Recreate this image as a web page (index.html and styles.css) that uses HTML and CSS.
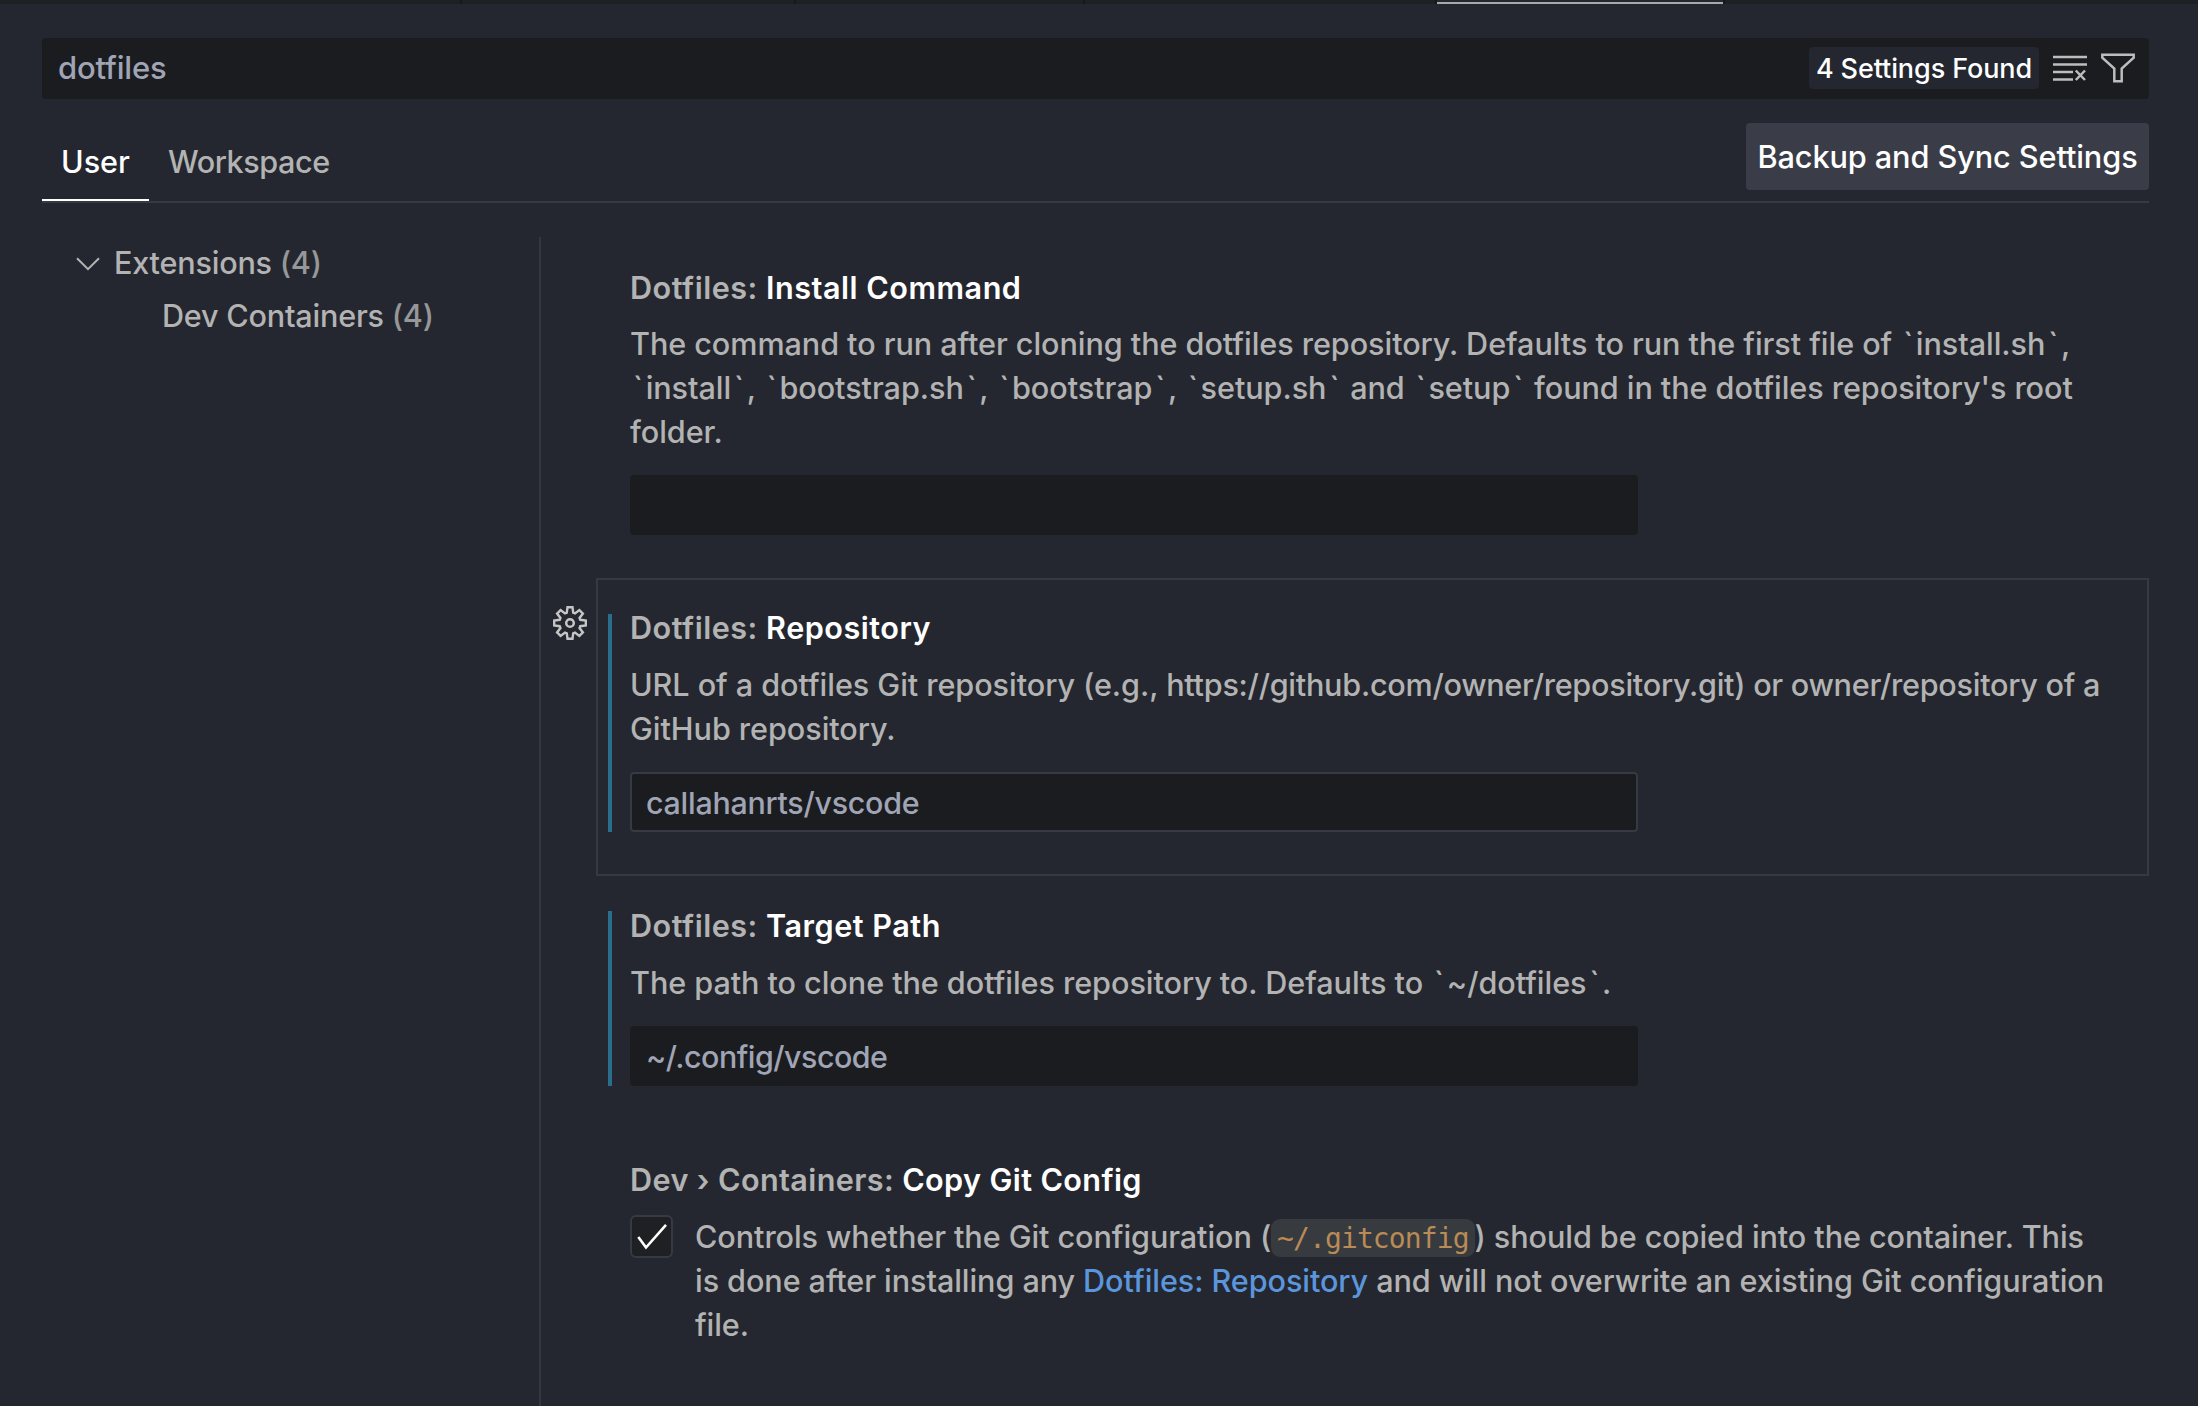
FILE: index.html
```html
<!DOCTYPE html>
<html lang="en">
<head>
<meta charset="utf-8">
<title>Settings</title>
<link rel="stylesheet" href="styles.css">
</head>
<body>
<div class="tabstrip"><i class="t1"></i><i class="t2"></i><i class="t3"></i><i class="t4"></i><i class="t5 active"></i><i class="t6"></i></div>
<div class="editor">
  <header class="search">
    <span class="query t">dotfiles</span>
    <span class="count t">4 Settings Found</span>
    <svg class="icon clear" viewBox="0 0 34 26"><path d="M0 2H34M0 9.500H34M0 17H20M0 24.500H20M22.800 15.500L32 25M32 15.500L22.800 25" fill="none" stroke="currentColor" stroke-width="2.500"/></svg>
    <svg class="icon filter" viewBox="0 0 34 30"><path d="M1.300 1.700H32.700V4.800L20.700 15.500V28.200H13.300V15.500L1.300 4.800Z" fill="none" stroke="currentColor" stroke-width="2.500"/></svg>
  </header>
  <nav class="scopes">
    <span class="scope on t">User</span>
    <span class="scope t">Workspace</span>
    <button class="sync t">Backup and Sync Settings</button>
  </nav>
  <div class="body">
    <aside class="toc">
      <div class="row"><svg class="chev" viewBox="0 0 24 14"><path d="M1 1.200L12 12.200L23 1.200" fill="none" stroke="currentColor" stroke-width="2"/></svg><span class="t">Extensions <em>(4)</em></span></div>
      <div class="row child"><span class="t">Dev Containers <em>(4)</em></span></div>
    </aside>
    <main class="list">
      <section class="item first">
        <h2 class="t">Dotfiles: <b>Install Command</b></h2>
        <p><span class="t">The command to run after cloning the dotfiles repository. Defaults to run the first file of <i>`</i>install.sh<i>`</i>,</span><span class="t"><i>`</i>install<i>`</i>, <i>`</i>bootstrap.sh<i>`</i>, <i>`</i>bootstrap<i>`</i>, <i>`</i>setup.sh<i>`</i> and <i>`</i>setup<i>`</i> found in the dotfiles repository's root</span><span class="t">folder.</span></p>
        <div class="input"></div>
      </section>
      <section class="item focused">
        <svg class="gear" viewBox="-17 -17 34 34"><path d="M-3.200-10.300L-2.500-15.800H2.500L3.200-10.300L5-9.550L9.400-12.900L12.900-9.400L9.550-5L10.300-3.200L15.800-2.500V2.500L10.300 3.200L9.550 5L12.900 9.400L9.400 12.900L5 9.550L3.200 10.300L2.500 15.800H-2.500L-3.200 10.300L-5 9.550L-9.400 12.900L-12.900 9.400L-9.550 5L-10.300 3.200L-15.800 2.500V-2.500L-10.300-3.200L-9.550-5L-12.900-9.400L-9.400-12.900L-5-9.550Z" fill="none" stroke="currentColor" stroke-width="2.400"/><circle r="3.800" fill="none" stroke="currentColor" stroke-width="2.500"/></svg>
        <div class="modified">
          <h2 class="t">Dotfiles: <b>Repository</b></h2>
          <p><span class="t">URL of a dotfiles Git repository (e.g., <span class="url">https://github.com/owner/repository.git) or owner/repository of a</span></span><span class="t">GitHub repository.</span></p>
          <div class="input outlined t">callahanrts/vscode</div>
        </div>
      </section>
      <section class="item target">
        <div class="modified">
          <h2 class="t">Dotfiles: <b>Target Path</b></h2>
          <p><span class="t">The path to clone the dotfiles repository to. Defaults to <i>`</i>~/dotfiles<i>`</i>.</span></p>
          <div class="input path t">~/.config/vscode</div>
        </div>
      </section>
      <section class="item copy">
        <h2 class="t">Dev › Containers: <b>Copy Git Config</b></h2>
        <div class="checkrow">
          <span class="box"><svg viewBox="0 0 30 28"><path d="M1.300 14L9 24.500L29 1.800" fill="none" stroke="#fff" stroke-width="2.600"/></svg></span>
          <p><span class="t">Controls whether the Git configuration (<code>~/.gitconfig</code>) should be copied into the container. This</span><span class="t">is done after installing any <a>Dotfiles: Repository</a> and will not overwrite an existing Git configuration</span><span class="t">file.</span></p>
        </div>
      </section>
    </main>
  </div>
</div>
</body>
</html>
```
FILE: styles.css
```css
* { box-sizing: border-box; }
html, body { margin: 0; height: 100%; }
body {
  background: #24272f;
  color: #b3b3b3;
  font: 450 30.6px/44px Inter, "Liberation Sans", sans-serif;
  letter-spacing: -.1px;
  overflow: hidden;
  display: flex;
  flex-direction: column;
}
.t { white-space: nowrap; }

/* bottom edge of the editor tabs */
.tabstrip { height: 4px; flex: none; display: flex; background: #1f2024; }
.tabstrip i { border-right: 2px solid #17181b; }
.t1 { width: 462px; }
.t2 { width: 334px; }
.t3 { width: 289px; }
.t4 { width: 352px; }
.tabstrip .active { width: 286px; background: #24272f; border-right: 0; border-bottom: 2px solid #a8aaa8; }
.tabstrip .t6 { width: 2px; }

.editor { flex: 1; display: flex; flex-direction: column; padding: 34px 49px 0 42px; min-height: 0; }

.search { height: 61px; flex: none; display: flex; align-items: center; background: #1b1c1f; border-radius: 4px; padding: 0 14px 2px 16px; color: #a0a5b6; }
.query { flex: 1; font-size: 31px; letter-spacing: -.2px; }
.count { width: 230px; height: 42px; margin-top: 1px; line-height: 43px; text-align: center; background: #24272f; color: #fff; border-radius: 4px; font-size: 27px; }
.icon { color: #bdbdbd; flex: none; }
.clear { width: 34px; height: 26px; margin-left: 14px; }
.filter { width: 34px; height: 30px; margin-left: 14px; }

.scopes { height: 104px; flex: none; display: flex; border-bottom: 2px solid #373a46; }
.scope { height: 102px; padding: 41px 18px 0 19px; letter-spacing: -.45px; }
.on { width: 107px; border-bottom: 2px solid #fff; color: #fff; letter-spacing: 0; }
.sync { margin: 24px 0 0 auto; width: 403px; height: 67px; border: 0; border-radius: 4px; background: #3a3d48; color: #fff; font: inherit; font-size: 30.7px; letter-spacing: -.1px; padding: 0; }

.body { flex: 1; display: flex; min-height: 0; padding-top: 34px; }
.toc { width: 499px; flex: none; border-right: 2px solid #343741; }
.row { height: 53px; display: flex; align-items: center; padding: 0 0 2px 34px; letter-spacing: -.22px; }
.row em { font-style: normal; opacity: .8; }
.chev { width: 24px; height: 14px; margin: 2px 14px 0 0; }
.child { padding-left: 120px; }

.list { flex: 1; margin-left: 55px; }
.item { border: 2px solid transparent; padding: 35px 0 0 32px; position: relative; }
.first { height: 341px; }
.focused { height: 298px; padding-top: 34px; border-color: #353944; }
.target { height: 253px; padding-top: 33px; }
h2 { margin: 0 0 20px; font-size: 30.6px; font-weight: 600; line-height: 28px; letter-spacing: .5px; }
h2 b { color: #fff; font-weight: 600; }
.focused h2 { margin-bottom: 21px; }
.target h2 { line-height: 30px; margin-bottom: 20px; }
p { margin: 0; letter-spacing: -.06px; }
p > .t { display: block; }
p i { font-style: normal; padding: 0 2.7px; }
.url { letter-spacing: -.27px; }
.input { width: 1008px; height: 60px; margin-top: 21px; padding: 0 16px; border-radius: 4px; background: #1b1c1f; color: #a0a5b6; line-height: 61px; font-size: 30.4px; letter-spacing: -.25px; }
.outlined { border: 2px solid #353a45; padding: 0 14px; line-height: 59px; }
.path { letter-spacing: -.5px; line-height: 62px; }
.modified { border-left: 4px solid #2a6e8e; margin-left: -22px; padding-left: 18px; }
.gear { position: absolute; left: -45px; top: 26px; width: 34px; height: 34px; color: #c5c5c5; }

.copy h2 { letter-spacing: .38px; margin-bottom: 21px; }
.copy p { letter-spacing: -.08px; }
.checkrow { display: flex; }
.box { width: 43px; height: 43px; margin: 0 22px 0 0; flex: none; border: 2px solid #353a45; border-radius: 6px; background: #1f2024; display: flex; align-items: center; justify-content: center; }
.box svg { width: 30px; height: 28px; flex: none; }
code { font: 28px/36px "DejaVu Sans Mono", monospace; vertical-align: 1px; letter-spacing: -.9px; color: #b98b57; background: #373a3e; border-radius: 9px; padding: 2.5px 6px; }
a { color: #5b96dc; }
```
